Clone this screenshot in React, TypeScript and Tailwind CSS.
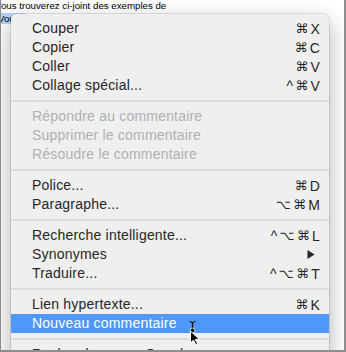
import React from "react";

type Item =
  | { kind: "sep" }
  | { kind: "item"; label: string; shortcut?: string; disabled?: boolean; submenu?: boolean; active?: boolean };

const items: Item[] = [
  { kind: "item", label: "Couper", shortcut: "⌘X" },
  { kind: "item", label: "Copier", shortcut: "⌘C" },
  { kind: "item", label: "Coller", shortcut: "⌘V" },
  { kind: "item", label: "Collage spécial...", shortcut: "^⌘V" },
  { kind: "sep" },
  { kind: "item", label: "Répondre au commentaire", disabled: true },
  { kind: "item", label: "Supprimer le commentaire", disabled: true },
  { kind: "item", label: "Résoudre le commentaire", disabled: true },
  { kind: "sep" },
  { kind: "item", label: "Police...", shortcut: "⌘D" },
  { kind: "item", label: "Paragraphe...", shortcut: "⌥⌘M" },
  { kind: "sep" },
  { kind: "item", label: "Recherche intelligente...", shortcut: "^⌥⌘L" },
  { kind: "item", label: "Synonymes", submenu: true },
  { kind: "item", label: "Traduire...", shortcut: "^⌥⌘T" },
  { kind: "sep" },
  { kind: "item", label: "Lien hypertexte...", shortcut: "⌘K" },
  { kind: "item", label: "Nouveau commentaire", active: true },
  { kind: "sep" },
  { kind: "item", label: "Rechercher avec Google" },
];

function Shortcut({ text, active }: { text: string; active?: boolean }) {
  return (
    <span
      className={`flex items-center gap-[2px] ${active ? "text-white" : "text-[#262626]"}`}
      style={{ fontFamily: '"Liberation Sans", "DejaVu Sans", sans-serif' }}
    >
      {Array.from(text).map((ch, i) => (
        <span
          key={i}
          className={
            ch === "⌘" || ch === "⌥"
              ? "text-[13px] leading-none [font-family:'DejaVu_Sans',sans-serif]"
              : "text-[14px] leading-none"
          }
        >
          {ch}
        </span>
      ))}
    </span>
  );
}

export default function App() {
  return (
    <div
      className="relative w-[346px] h-[352px] overflow-hidden bg-white border-l border-r-2 border-b-2 border-[#8e8e8e]"
      style={{ fontFamily: '"Liberation Sans", Arial, sans-serif' }}
    >
      <div className="text-[9.7px] leading-[13px] text-black mt-[-1.5px] whitespace-nowrap">
        <div className="ml-[-6px]">Vous trouverez ci-joint des exemples de</div>
        <div className="ml-[-3px]">
          <span className="bg-[#b5d5fb] pr-[5px]">Vous</span> trouverez ci-joint
        </div>
      </div>

      <div className="absolute left-[10px] top-[14px] w-[318px] rounded-[5px] bg-[#efefef] pt-[5px] pb-[5px] shadow-[0_0_0_0.5px_rgba(0,0,0,0.2),0_8px_22px_rgba(0,0,0,0.32)]">
        {items.map((it, i) =>
          it.kind === "sep" ? (
            <div key={i} className="h-[12px] flex items-center">
              <div className="h-[2px] w-full bg-[#dcdcdc]" />
            </div>
          ) : (
            <div
              key={i}
              className={`h-[19px] flex items-center justify-between pl-[21px] pr-[9px] text-[14px] tracking-[0.2px] whitespace-nowrap ${
                it.active ? "bg-[#4f97f8] text-white" : it.disabled ? "text-[#b0b0b0]" : "text-[#262626]"
              }`}
            >
              <span>{it.label}</span>
              {it.shortcut && <Shortcut text={it.shortcut} active={it.active} />}
              {it.submenu && (
                <svg width="8" height="9" viewBox="0 0 8 9" className="mr-[5px]">
                  <path d="M0.5 0 L7.5 4.5 L0.5 9 Z" fill="#262626" />
                </svg>
              )}
            </div>
          )
        )}
      </div>

      <svg
        className="absolute left-[186px] top-[320px]"
        width="18"
        height="28"
        viewBox="0 0 18 28"
      >
        <path d="M2.5 1.5 Q4 1.5 5.5 3 Q7 1.5 8.5 1.5" stroke="#000" strokeWidth="1.2" fill="none" />
        <path d="M5.5 3 L5.5 9" stroke="#000" strokeWidth="1.2" />
        <circle cx="5.5" cy="10.5" r="2.4" fill="#000" stroke="#fff" strokeWidth="0.8" />
        <path
          d="M3.5 11 L3.5 23 L6.5 20 L8.8 25 L10.6 24.2 L8.4 19.4 L12.3 19.4 Z"
          fill="#000"
          stroke="#fff"
          strokeWidth="1"
          strokeLinejoin="round"
        />
      </svg>
    </div>
  );
}
